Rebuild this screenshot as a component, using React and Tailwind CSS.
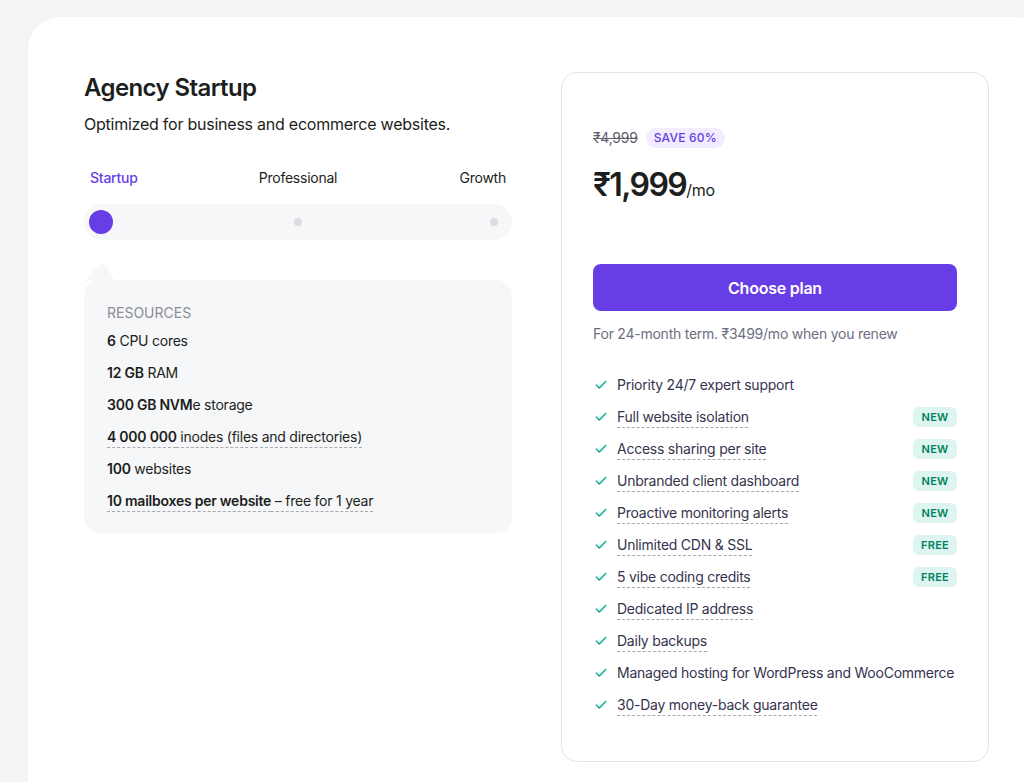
import React from "react";
import { Check } from "lucide-react";

const font = { fontFamily: "Inter, 'Noto Sans', 'DejaVu Sans', sans-serif" };

const resources = [
  { b: "6", t: " CPU cores" },
  { b: "12 GB", t: " RAM" },
  { b: "300 GB NVM", t: "e storage" },
  { b: "4 000 000", t: " inodes (files and directories)", u: true },
  { b: "100", t: " websites" },
  { b: "10 mailboxes per website", t: " – free for 1 year", u: true },
];

const features = [
  { t: "Priority 24/7 expert support" },
  { t: "Full website isolation", u: true, badge: "NEW" },
  { t: "Access sharing per site", u: true, badge: "NEW" },
  { t: "Unbranded client dashboard", u: true, badge: "NEW" },
  { t: "Proactive monitoring alerts", u: true, badge: "NEW" },
  { t: "Unlimited CDN & SSL", u: true, badge: "FREE" },
  { t: "5 vibe coding credits", u: true, badge: "FREE" },
  { t: "Dedicated IP address", u: true },
  { t: "Daily backups", u: true },
  { t: "Managed hosting for WordPress and WooCommerce" },
  { t: "30-Day money-back guarantee", u: true },
];

const ul =
  "underline decoration-dashed decoration-[#a8a8b3] decoration-1 underline-offset-[5px]";

export default function App() {
  return (
    <div
      className="h-[782px] w-[1024px] overflow-hidden bg-[#f4f4f4] pt-[17px] pl-[28px] tracking-[-0.015em]"
      style={font}
    >
      <div className="flex h-[800px] w-[1020px] gap-[49px] rounded-t-[32px] bg-white pl-[56px] pt-[55px]">
        {/* Left column */}
        <div className="flex w-[428px] flex-col">
          <h1 className="text-[24px] font-semibold leading-[32px] tracking-[-0.025em] text-[#1d1e20]">
            Agency Startup
          </h1>
          <p className="mt-[8px] text-[16px] leading-[24px] text-[#1d1e20]">
            Optimized for business and ecommerce websites.
          </p>

          <div className="mt-[32px] grid grid-cols-3 px-[6px] text-[14px] leading-[20px]">
            <span className="text-left font-medium text-[#673de6]">Startup</span>
            <span className="text-center text-[#1d1e20]">Professional</span>
            <span className="text-right text-[#1d1e20]">Growth</span>
          </div>

          <div className="mt-[16px] flex h-[36px] items-center justify-between rounded-full bg-[#f6f7f9] pl-[5px] pr-[6px]">
            <span className="flex h-[24px] w-[24px] items-center justify-center">
              <span className="h-[24px] w-[24px] rounded-full bg-[#673de6]" />
            </span>
            <span className="flex h-[24px] w-[24px] items-center justify-center">
              <span className="h-[8px] w-[8px] rounded-full bg-[#dadce0]" />
            </span>
            <span className="flex h-[24px] w-[24px] items-center justify-center">
              <span className="h-[8px] w-[8px] rounded-full bg-[#dadce0]" />
            </span>
          </div>

          <div className="relative mt-[40px] rounded-[16px] bg-[#f6f7f9] px-[23px] pb-[22px] pt-[23px]">
            <svg
              className="absolute left-[1px] top-[-17px]"
              width="30"
              height="18"
              viewBox="0 0 30 18"
            >
              <path d="M0 18 L14 2 Q17 -1 20 2 L30 18 Z" fill="#f6f7f9" />
            </svg>
            <div className="text-[14px] leading-[20px] tracking-[0px] text-[#8c8c99]">
              RESOURCES
            </div>
            <div className="mt-[8px] flex flex-col gap-[12px]">
              {resources.map((r, i) => (
                <div key={i} className="text-[14px] leading-[20px] text-[#1d1e20]">
                  <span className={r.u ? ul : ""}>
                    <span className="font-semibold">{r.b}</span>
                    {r.t}
                  </span>
                </div>
              ))}
            </div>
          </div>
        </div>

        {/* Right card */}
        <div className="flex h-[690px] w-[428px] flex-col rounded-[16px] border border-[#e3e3e8] px-[31px] pt-[55px]">
          <div className="flex items-center gap-[8px]">
            <span className="text-[14px] leading-[20px] text-[#5f5f6e] line-through">
              ₹4,999
            </span>
            <span className="flex h-[20px] items-center rounded-full bg-[#f1ecff] px-[8px] text-[12px] font-medium tracking-[0.2px] text-[#673de6]">
              SAVE 60%
            </span>
          </div>
          <div className="mt-[17px] flex items-baseline text-[#1d1e20]">
            <span className="text-[32px] font-semibold leading-[40px] tracking-[-0.05em]">
              ₹1,999
            </span>
            <span className="text-[16px] leading-[24px]">/mo</span>
          </div>

          <button className="mt-[59px] flex h-[47px] w-full items-center justify-center rounded-[8px] bg-[#673de6] text-[16px] font-semibold text-white">
            Choose plan
          </button>

          <p className="mt-[13px] text-[14px] leading-[20px] text-[#6d7081]">
            For 24-month term. ₹3499/mo when you renew
          </p>

          <div className="mt-[31px] flex flex-col gap-[12px]">
            {features.map((f, i) => (
              <div key={i} className="flex h-[20px] items-center justify-between">
                <div className="flex items-center gap-[9px]">
                  <Check
                    size={14}
                    strokeWidth={2.5}
                    className="ml-[1px] shrink-0 text-[#00b090]"
                  />
                  <span
                    className={
                      "whitespace-nowrap text-[14px] leading-[20px] text-[#36344d] " +
                      (f.u ? ul : "")
                    }
                  >
                    {f.t}
                  </span>
                </div>
                {f.badge && (
                  <span className="flex h-[20px] w-[44px] items-center justify-center rounded-[6px] bg-[#def4f0] text-[11px] font-semibold tracking-[0.2px] text-[#008361]">
                    {f.badge}
                  </span>
                )}
              </div>
            ))}
          </div>
        </div>
      </div>
    </div>
  );
}
